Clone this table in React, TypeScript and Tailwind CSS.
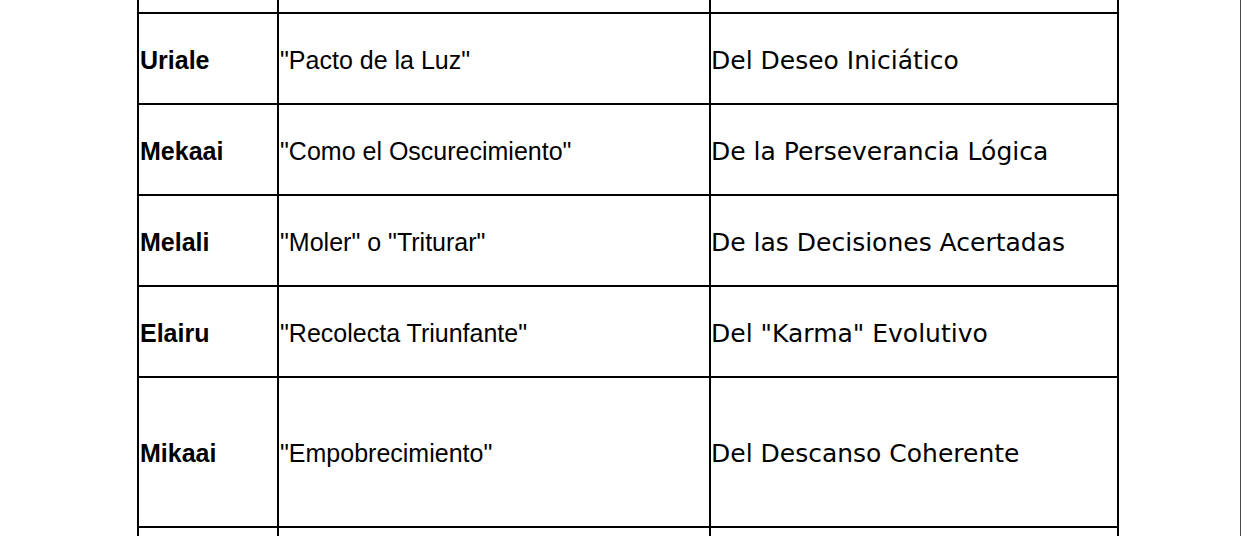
const rows = [
  { name: "Uriale", meaning: "\"Pacto de la Luz\"", virtue: "Del Deseo Iniciático", h: "h-[89px]" },
  { name: "Mekaai", meaning: "\"Como el Oscurecimiento\"", virtue: "De la Perseverancia Lógica", h: "h-[89px]" },
  { name: "Melali", meaning: "\"Moler\" o \"Triturar\"", virtue: "De las Decisiones Acertadas", h: "h-[89px]" },
  { name: "Elairu", meaning: "\"Recolecta Triunfante\"", virtue: "Del \"Karma\" Evolutivo", h: "h-[89px]" },
  { name: "Mikaai", meaning: "\"Empobrecimiento\"", virtue: "Del Descanso Coherente", h: "h-[148px]" },
];

export default function App() {
  return (
    <div className="h-[536px] w-[1241px] overflow-hidden bg-white border-r border-[#4a4a4a]">
      <div className="ml-[137px] grid w-[982px] grid-cols-[138px_430px_406px] gap-[2px] bg-black px-[2px] text-black">
        {/* row cut off by the top edge */}
        <div className="h-[12px] bg-white" />
        <div className="h-[12px] bg-white" />
        <div className="h-[12px] bg-white" />

        {rows.map((r) => (
          <div key={r.name} className="contents">
            <div className={`${r.h} flex items-center bg-white pl-[1px] pt-[4px] font-['Liberation_Sans',Arial,sans-serif] text-[25px] font-bold`}>
              {r.name}
            </div>
            <div className={`${r.h} flex items-center bg-white pl-[1px] pt-[4px] font-['Liberation_Sans',Arial,sans-serif] text-[25px]`}>
              {r.meaning}
            </div>
            <div className={`${r.h} flex items-center bg-white pt-[4px] font-['DejaVu_Sans',Verdana,sans-serif] text-[25px]`}>
              {r.virtue}
            </div>
          </div>
        ))}

        <div className="h-[89px] bg-white" />
        <div className="h-[89px] bg-white" />
        <div className="h-[89px] bg-white" />
      </div>
    </div>
  );
}
